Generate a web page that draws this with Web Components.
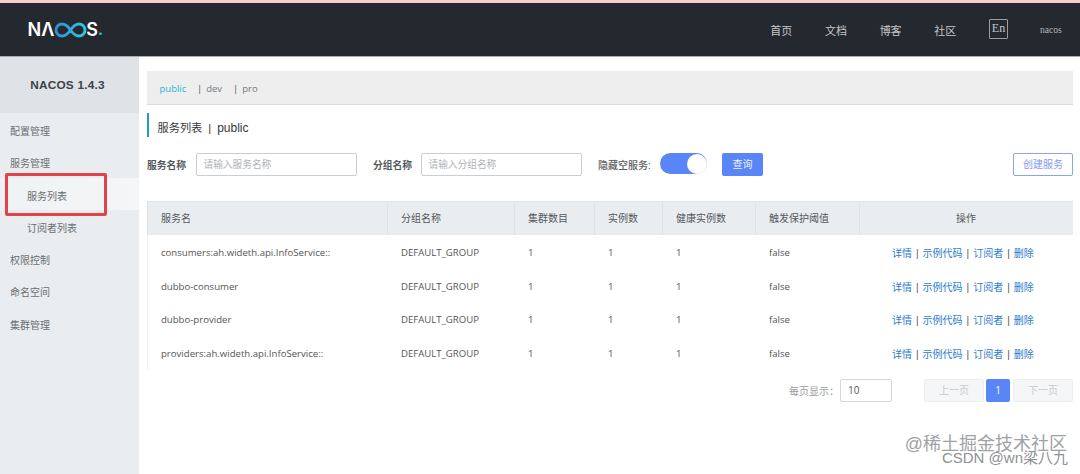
<!DOCTYPE html>
<html lang="zh"><head><meta charset="utf-8"><style>
html,body{margin:0;padding:0;height:100%;overflow:hidden;background:#fff}
body{font-family:"Liberation Sans","Noto Sans CJK SC",sans-serif;font-size:10px;color:#555}
nacos-app{height:474px}
</style></head><body>
<nacos-app></nacos-app>
<script>
function def(name,html,setup){customElements.define(name,class extends HTMLElement{constructor(){super();const s=this.attachShadow({mode:'open'});s.innerHTML=html;}connectedCallback(){setup&&setup.call(this,this.shadowRoot)}})}

def('nacos-logo',`<style>
:host{display:inline-flex;align-items:center;color:#fff;font:600 18px/1 "Inter","Liberation Sans",sans-serif;height:20px}
svg{display:block;margin:0 -1px 0 0}
.lam{font-weight:600}
.dot{color:#2fb9d6;font-size:15px;font-weight:700}
</style><span>N</span><span class="lam">Λ</span><svg width="33" height="16" viewBox="0 0 33 16" fill="none" stroke-width="2.800"><defs><linearGradient id="g" x1="0" x2="1"><stop offset="0" stop-color="#2f8fd9"/><stop offset="1" stop-color="#37c6dc"/></linearGradient></defs><path stroke="url(#g)" d="M16.500 8C13.500 3.600 11 2 8 2 4.600 2 2 4.700 2 8s2.600 6 6 6c3 0 5.500-1.600 8.500-6 3-4.400 5.500-6 8.500-6 3.400 0 6 2.700 6 6s-2.600 6-6 6c-3 0-5.500-1.600-8.500-6z"/></svg><span>S</span><span class="dot">.</span>`);

def('top-bar',`<style>
:host{display:flex;align-items:center;height:54px;background:#24292f;padding:0 28px 0 27.500px;box-sizing:border-box;flex:none;border-bottom:1px solid #a9acaf}
nav{margin-left:auto;display:flex;align-items:center;color:#c4c6c8;font-size:11px}
nav a{width:54.700px;display:block}
.en{box-sizing:border-box;width:19px;height:20px;border:1px solid #9a9da0;border-radius:1px;font:12px/17px "Liberation Serif",serif;text-align:center;color:#c4c6c8;margin:-2px 0 0 0}
.u{font:9.500px "Liberation Serif",serif;color:#b5b7ba;margin:0 -12px 0 32px;width:24px}
</style><nacos-logo></nacos-logo><nav><a>首页</a><a>文档</a><a>博客</a><a>社区</a><span class="en">En</span><span class="u">nacos</span></nav>`);

def('side-item',`<style>
:host{display:block;height:32.300px;line-height:32px;padding-left:10px;color:#6b6f72;font-size:10px;box-sizing:border-box}
:host([sub]){padding-left:27px}
:host([active]){background:linear-gradient(90deg,#eff2f4,#f4f6f8);margin:-3px 0 3px;line-height:38px}
</style><slot></slot>`);

def('side-bar',`<style>
:host{display:block;width:139px;flex:none;background:#e9edf0;position:relative}
.t{height:56px;background:#dfe3e7;font:700 11.800px/56px "Liberation Sans",sans-serif;color:#3d4248;text-align:center;margin-bottom:3px;padding-right:4px;box-sizing:border-box;letter-spacing:.2px}
.box{position:absolute;left:5px;top:116px;width:102px;height:43px;box-sizing:border-box;border:3px solid #e0444a;border-radius:2px}
</style><div class="t">NACOS 1.4.3</div><slot></slot><div class="box"></div>`);

def('env-tabs',`<style>
:host{display:flex;align-items:center;height:34px;box-sizing:border-box;background:#eeeeee;border-bottom:1px solid #dcdcdc;padding:2px 0 0 12.500px;font-size:9.500px;color:#75797c;font-family:"Open Sans","Noto Sans CJK SC",sans-serif}
.a{color:#22b8cf;width:37.500px}
.i{width:36px}
.s{color:#555;margin-right:4px}
</style><span class="a">public</span><span class="i"><span class="s">|</span>dev</span><span><span class="s">|</span>pro</span>`);

def('page-title',`<style>
:host{display:block;height:24px;margin-top:8px;border-left:2.500px solid #1f9fc4;padding-left:8.500px;font-size:11.200px;line-height:30px;color:#33383c}
span{margin:0 6px}
em{font-style:normal;font-size:12px}
</style>服务列表<span>|</span><em>public</em>`);

def('text-input',`<style>
:host{display:inline-block;box-sizing:border-box;height:23px;border:1px solid #c9ced2;border-radius:2px;background:#fff;padding-left:6.500px;font-size:9.700px;line-height:21px;color:#b0b3b6}
</style><slot></slot>`);

def('toggle-switch',`<style>
:host{display:inline-flex;justify-content:flex-end;box-sizing:border-box;width:47px;height:21px;border-radius:11px;background:#5a85f6;padding:.5px;margin-top:-2px}
i{display:block;width:20px;height:20px;border-radius:50%;background:#fff}
</style><i></i>`);

def('ui-button',`<style>
:host{display:inline-block;box-sizing:border-box;height:23px;border-radius:2px;font-size:10px;line-height:23px;text-align:center;background:#5a85f6;color:#eef2ff;width:41px}
:host([ghost]){background:#fff;color:#7f9cf0;border:1px solid #8aa5ea;width:60px;line-height:21px}
</style><slot></slot>`);

def('filter-bar',`<style>
:host{display:flex;align-items:center;height:23px;margin-top:16px}
b{font-weight:700;color:#55595c;font-size:9.750px}
.l{color:#5c6063;font-size:10px;font-weight:500}
.sp{margin-left:auto}
</style><b style="width:49px">服务名称</b><text-input style="width:161px">请输入服务名称</text-input><b style="width:48px;margin-left:16px">分组名称</b><text-input style="width:161px">请输入分组名称</text-input><span class="l" style="margin-left:16px;width:62px">隐藏空服务:</span><toggle-switch></toggle-switch><ui-button style="margin-left:15px">查询</ui-button><span class="sp"></span><ui-button ghost>创建服务</ui-button>`);

const cols='240px 127px 80px 68px 93px 104px 1fr';
def('table-row',`<style>
:host{display:grid;grid-template-columns:${cols};height:33.800px;padding-top:1px;box-sizing:border-box;align-items:center;font-size:9.600px;color:#555;font-family:"Open Sans","Noto Sans CJK SC",sans-serif;background:#fff;box-shadow:inset 1px 0 0 #eef0f2}
span{padding-left:14px}
.ops{color:#2b7bd0;padding-left:33px;white-space:nowrap;font-size:10px;font-family:"Liberation Sans","Noto Sans CJK SC",sans-serif}
.ops i{font-style:normal;color:#555;margin:0 4px}
</style><span id="n"></span><span>DEFAULT_GROUP</span><span>1</span><span>1</span><span>1</span><span>false</span><span class="ops">详情<i>|</i>示例代码<i>|</i>订阅者<i>|</i>删除</span>`,function(s){s.getElementById('n').textContent=this.getAttribute('name')});

def('table-head',`<style>
:host{display:grid;grid-template-columns:${cols};height:34px;background:#e9edf0;border-top:1px solid #e0e4e7;box-sizing:border-box;font-size:10px;color:#55595c;align-items:stretch}
span{padding-left:14px;line-height:33px;box-shadow:inset 1px 0 0 #dfe3e6}
span:first-child{box-shadow:none}
span:last-child{padding:0;text-align:center}
</style><span>服务名</span><span>分组名称</span><span>集群数目</span><span>实例数</span><span>健康实例数</span><span>触发保护阈值</span><span>操作</span>`);

def('data-table',`<style>
:host{display:block;margin-top:25px}
</style><table-head></table-head><slot></slot>`);

def('page-bar',`<style>
:host{display:flex;align-items:center;justify-content:flex-end;height:23px;margin-top:9px;font-size:10px;color:#9a9da0}
.sel{box-sizing:border-box;width:52px;height:23px;border:1px solid #d5d8db;border-radius:2px;color:#55595c;line-height:21px;padding-left:7px;margin:0 32px 0 1px;font-family:"Open Sans",sans-serif}
.b{box-sizing:border-box;height:23px;width:60px;background:#f5f6f7;border:1px solid #eceef0;border-radius:2px;color:#c8cacc;line-height:21px;text-align:center}
.c{box-sizing:border-box;height:23px;width:24px;background:#5a85f6;color:#fff;border-radius:2px;line-height:23px;text-align:center;margin:0 3px 0 2px;font-family:"Open Sans",sans-serif}
</style><span>每页显示：</span><span class="sel">10</span><span class="b">上一页</span><span class="c">1</span><span class="b">下一页</span>`);

def('water-mark',`<style>
:host{position:absolute;right:8px;bottom:3px;width:170px;height:36px;pointer-events:none}
.a{position:absolute;right:5px;top:-2px;font-size:18px;line-height:22px;white-space:nowrap;color:#a0a2a5}
.b{position:absolute;right:4px;top:13px;font-size:15px;line-height:20px;white-space:nowrap;color:#8f9194}
</style><span class="a">@稀土掘金技术社区</span><span class="b">CSDN @wn梁八九</span>`);

def('main-pane',`<style>
:host{display:block;flex:1;min-width:0;padding:14px 7px 0 8px;box-sizing:border-box;position:relative}
</style><slot></slot>`);

def('nacos-app',`<style>
:host{display:flex;flex-direction:column;width:1080px}
.strip{height:3px;background:#f6cfc9;flex:none}
.body{display:flex;flex:1;min-height:0}
</style><div class="strip"></div><top-bar></top-bar><div class="body"><side-bar>
<side-item>配置管理</side-item><side-item>服务管理</side-item><side-item sub active>服务列表</side-item><side-item sub>订阅者列表</side-item><side-item>权限控制</side-item><side-item>命名空间</side-item><side-item>集群管理</side-item>
</side-bar><main-pane><env-tabs></env-tabs><page-title></page-title><filter-bar></filter-bar><data-table>
<table-row name="consumers:ah.wideth.api.InfoService::"></table-row><table-row name="dubbo-consumer"></table-row><table-row name="dubbo-provider"></table-row><table-row name="providers:ah.wideth.api.InfoService::"></table-row>
</data-table><page-bar></page-bar></main-pane></div><water-mark></water-mark>`);
</script></body></html>
